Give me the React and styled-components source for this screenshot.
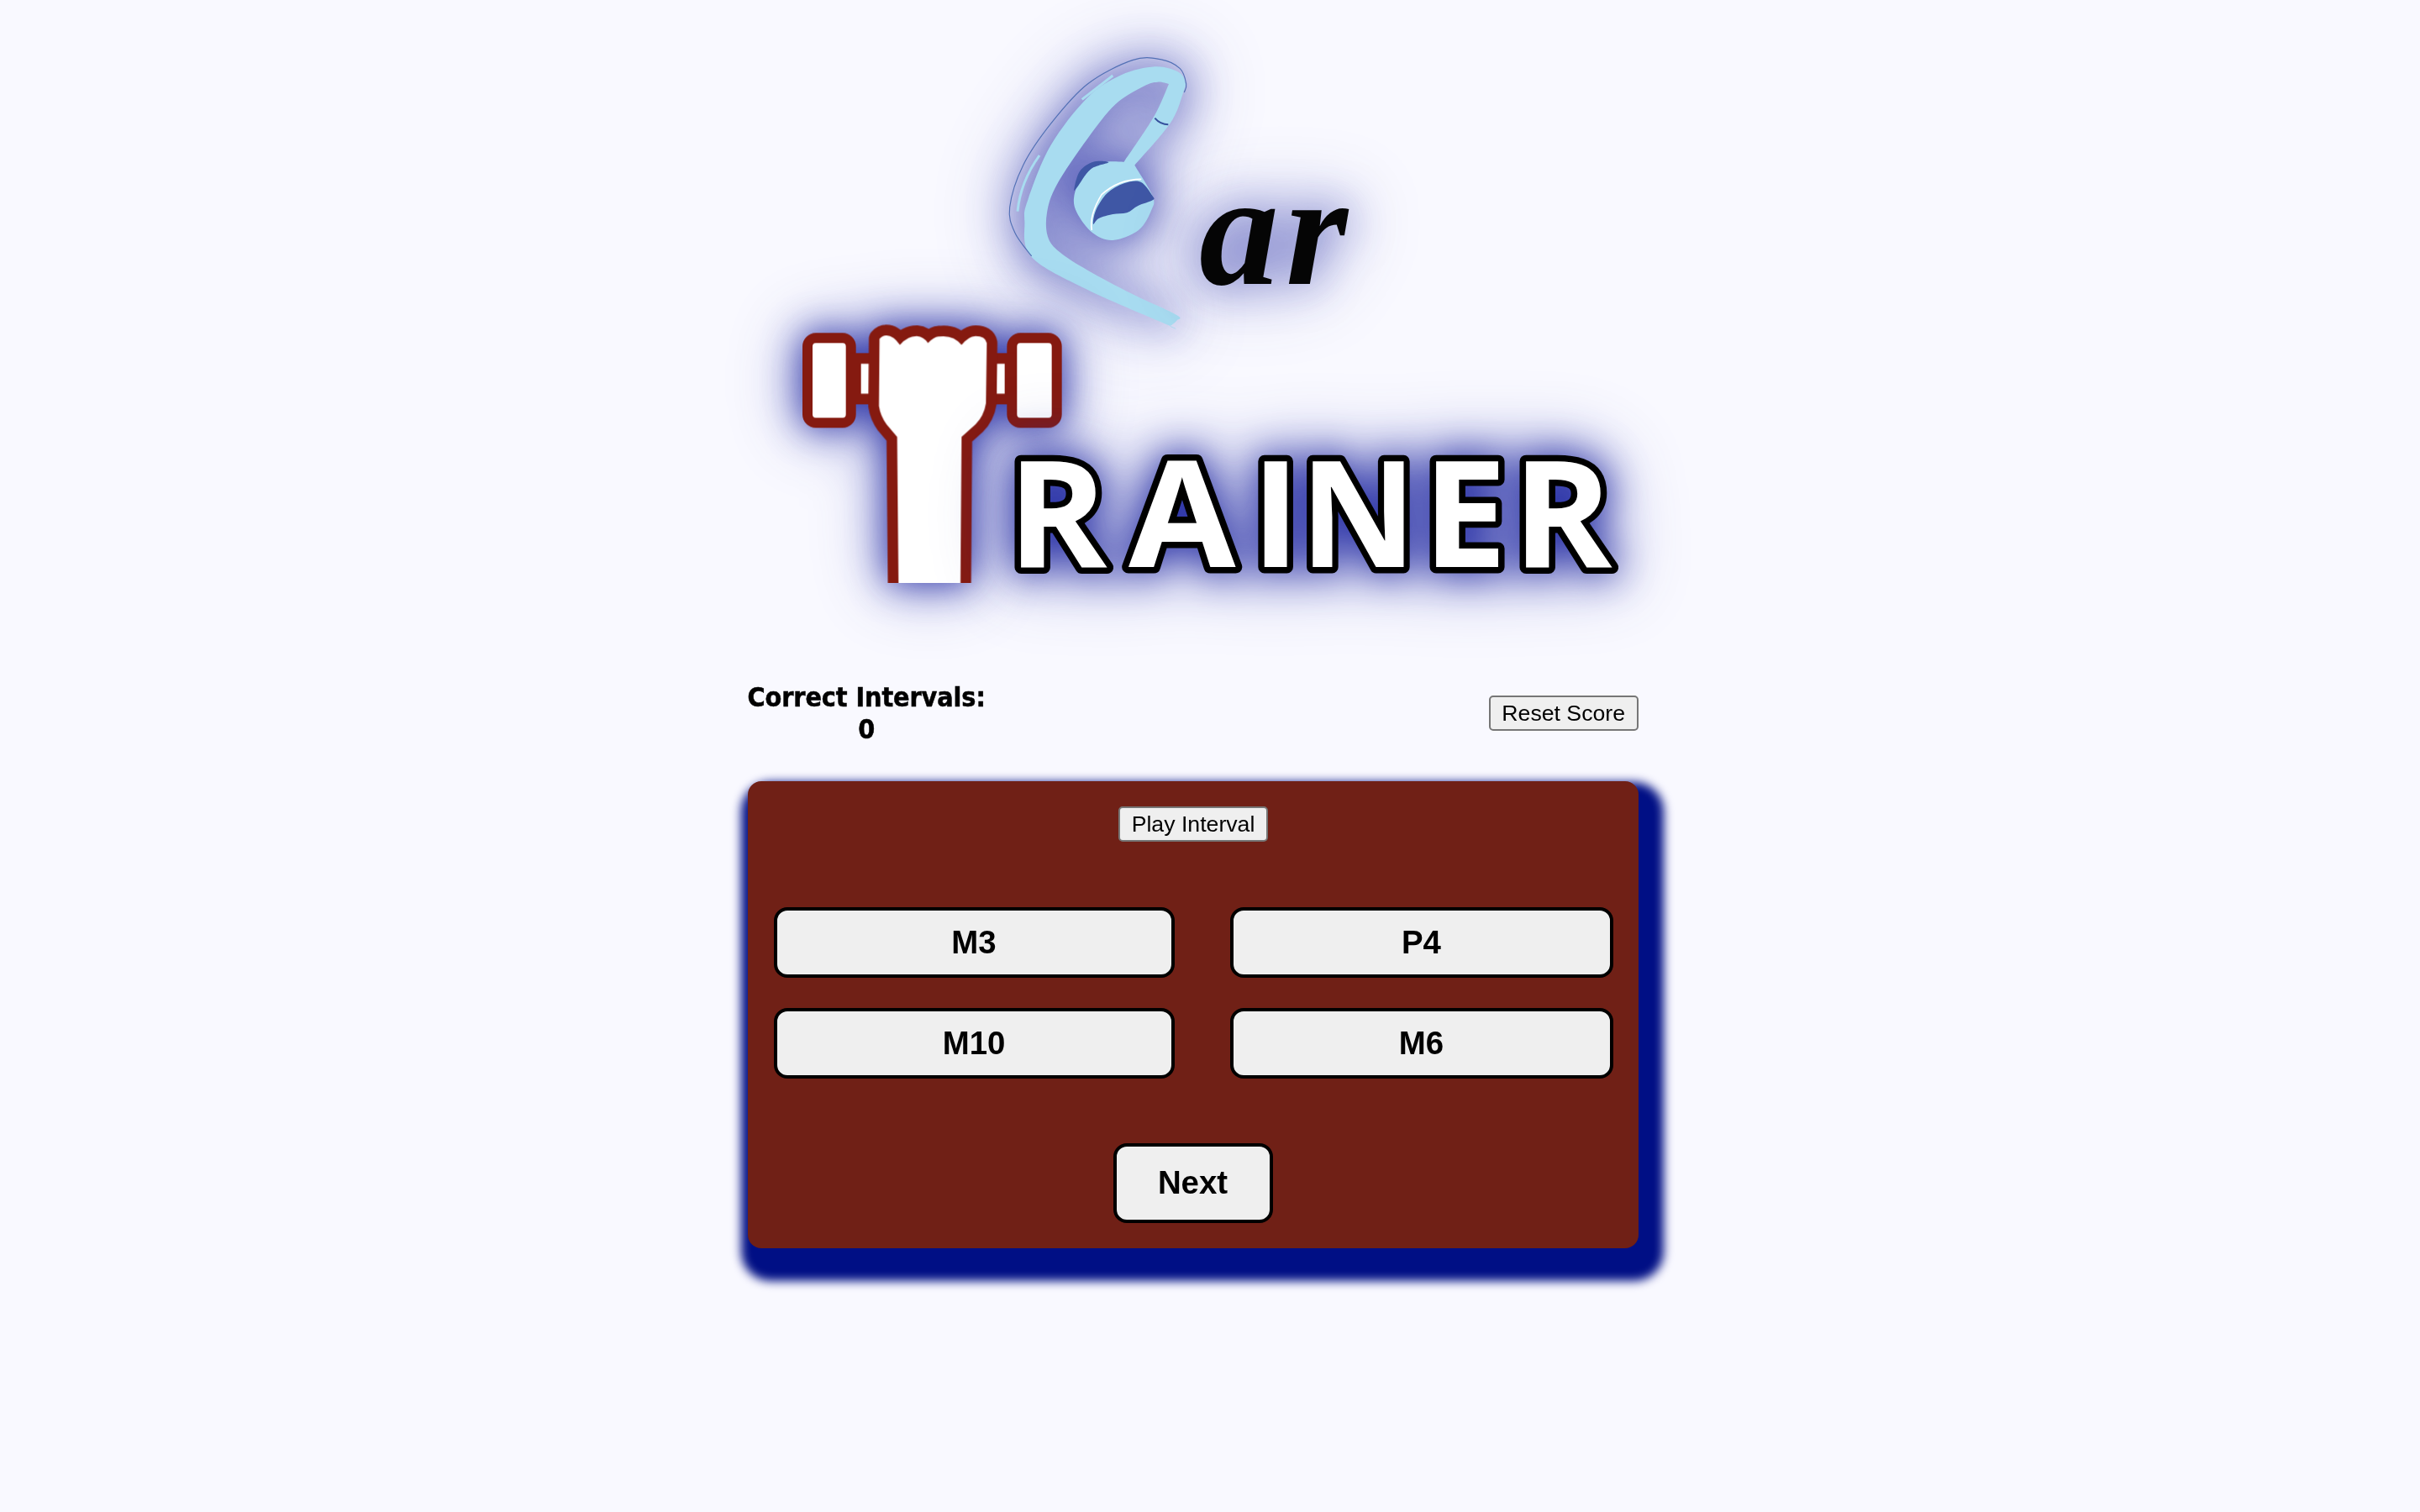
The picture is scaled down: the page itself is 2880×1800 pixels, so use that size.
import React from "react";
import styled, { createGlobalStyle } from "styled-components";

const GlobalStyle = createGlobalStyle`
  html, body { margin: 0; padding: 0; background: #f9f9ff; }
  body { font-family: "Liberation Sans", Arial, sans-serif; }
`;

const Page = styled.main`
  min-height: 1800px;
  box-sizing: border-box;
  padding-right: 41px;
  display: flex;
  flex-direction: column;
  align-items: center;
  background: #f9f9ff;
`;

const Column = styled.div`
  width: 1060px;
  display: flex;
  flex-direction: column;
`;

const LogoSvg = styled.svg`
  display: block;
  width: 1060px;
  height: 811px;
  overflow: visible;
`;

const Glow = styled.g`
  filter: drop-shadow(0 0 ${(p) => p.$blur}px rgba(38, 46, 165, ${(p) => p.$alpha}))
    drop-shadow(0 0 ${(p) => p.$blur * 1.6}px rgba(38, 46, 165, 0.45));
`;

const ScriptText = styled.text`
  font-family: "Liberation Serif", serif;
  font-style: italic;
  font-weight: 700;
  font-size: 190px;
  letter-spacing: 8px;
  fill: #050505;
`;

const TrainerLetter = styled.text`
  font-family: "Open Sans", sans-serif;
  font-weight: 700;
  font-size: 176px;
  fill: #fff;
  stroke: #000;
  stroke-width: 15px;
  stroke-linejoin: round;
  paint-order: stroke fill;
`;

const ScoreRow = styled.section`
  display: flex;
  justify-content: space-between;
  align-items: center;
  height: 76px;
`;

const Score = styled.div`
  font-family: "DejaVu Sans", sans-serif;
  font-weight: 700;
  font-stretch: condensed;
  font-size: 32px;
  letter-spacing: -0.1px;
  -webkit-text-stroke: 0.5px #000;
  line-height: 38px;
  text-align: center;
  color: #000;
`;

const SmallButton = styled.button`
  box-sizing: border-box;
  height: 42px;
  padding: 0 13.5px;
  border: 2px solid #767676;
  border-radius: 5px;
  background: #efefef;
  color: #000;
  font-family: "Liberation Sans", Arial, sans-serif;
  font-size: 26.67px;
  line-height: 1;
`;

const Panel = styled.section`
  margin-top: 43px;
  box-sizing: border-box;
  height: 556px;
  padding: 30px 30px 30px 31px;
  border-radius: 16px;
  background: #702016;
  box-shadow: 11px 20px 12px 19px #000f85;
  display: flex;
  flex-direction: column;
  align-items: center;
`;

const PlayRow = styled.div`
  width: 100%;
  display: flex;
  justify-content: center;
  box-sizing: border-box;
`;

const AnswerGrid = styled.div`
  width: 100%;
  margin-top: 78px;
  display: grid;
  grid-template-columns: 477fr 456fr;
  column-gap: 66px;
  row-gap: 36px;
`;

const BigButton = styled.button`
  box-sizing: border-box;
  border: 4px solid #000;
  border-radius: 16px;
  background: #efefef;
  color: #000;
  font-family: "Liberation Sans", Arial, sans-serif;
  font-weight: 700;
  font-size: 38.4px;
  line-height: 1;
`;

const AnswerButton = styled(BigButton)`
  height: 84px;
`;

const NextButton = styled(BigButton)`
  margin: 77px 1px 0 0;
  width: 190px;
  height: 96px;
`;

const smooth = (pts, closed = true) => {
  let d = `M${pts[0][0]} ${pts[0][1]}`;
  const n = pts.length;
  const at = (i) => (closed ? pts[(i + n) % n] : pts[Math.max(0, Math.min(n - 1, i))]);
  for (let i = 0; i < (closed ? n : n - 1); i++) {
    const p0 = at(i - 1);
    const p1 = at(i);
    const p2 = at(i + 1);
    const p3 = at(i + 2);
    d += `C${p1[0] + (p2[0] - p0[0]) / 6} ${p1[1] + (p2[1] - p0[1]) / 6} ${p2[0] - (p3[0] - p1[0]) / 6} ${p2[1] - (p3[1] - p1[1]) / 6} ${p2[0]} ${p2[1]}`;
  }
  return closed ? d + "Z" : d;
};

const headset = smooth([
  [695, 1014], [695, 1014], [400, 885], [200, 768], [175, 640], [188, 560], [268, 370], [398, 200], [520, 118], [640, 88],
  [720, 105], [748, 140], [740, 185], [694, 292], [568, 440], [568, 440], [632, 550], [628, 600], [582, 672], [490, 708],
  [418, 682], [362, 610], [352, 550], [383, 480], [450, 432], [530, 428], [530, 428], [636, 268], [690, 150], [690, 150],
  [650, 143], [600, 158], [500, 222], [400, 345], [290, 510], [255, 610], [258, 695], [300, 750], [400, 815], [560, 900],
  [718, 975], [718, 995],
]);

const cupDark = smooth([
  [420, 650], [430, 600], [470, 540], [530, 505], [590, 500], [632, 550], [632, 565], [580, 585], [540, 610], [490, 615], [440, 630],
]);

const cupBack = smooth([[352, 525], [372, 462], [420, 428], [475, 430], [410, 455], [362, 520]]);

const earOutline = smooth(
  [[200, 765], [140, 680], [122, 590], [170, 440], [270, 290], [400, 150], [560, 65], [660, 62], [730, 95], [752, 150], [745, 180]],
  false,
);

const fist = "M347 100Q358 88 370 88Q395 86 420 122Q445 90 480 90Q505 92 520 115Q545 90 560 92Q610 85 640 122Q665 90 690 90Q725 90 730 115L727 330Q720 375 690 405L640 450L636 990L415 990L410 450L372 405Q350 375 345 340Z";

const letters = [
  { ch: "R", x: 1198, sx: 1.02 },
  { ch: "A", x: 1342, sx: 1.05 },
  { ch: "I", x: 1488, sx: 1 },
  { ch: "N", x: 1546, sx: 0.97 },
  { ch: "E", x: 1692, sx: 1.02 },
  { ch: "R", x: 1799, sx: 1.02 },
];

const LogoMark = () => (
  <LogoSvg viewBox="889 0 1060 811" role="img" aria-label="Ear Trainer">
    <Glow $blur={26} $alpha={0.8}>
      <g transform="translate(1160 50) scale(0.33333)">
        <path d={headset} fill="#a8dcf0" />
        <path d={cupBack} fill="#3f57a5" />
        <path d={cupDark} fill="#3f57a5" />
        <path d="M415 672Q405 620 450 545Q510 490 592 490" fill="none" stroke="#fff" strokeWidth="5" />
        <path d={earOutline} fill="none" stroke="#5270b5" strokeWidth="3.5" />
        <path d="M150 605Q160 500 228 405" fill="none" stroke="#a8dcf0" strokeWidth="9" />
        <path d="M380 205L490 120" fill="none" stroke="#a8dcf0" strokeWidth="9" />
        <path d="M640 272Q660 295 688 295" fill="none" stroke="#35509c" strokeWidth="6" />
      </g>
    </Glow>
    <Glow $blur={26} $alpha={0.6}>
      <ScriptText x="1426" y="338">ar</ScriptText>
    </Glow>
    <Glow $blur={22} $alpha={0.9}>
      <g transform="translate(930 370) scale(0.33333)">
        <rect x="90" y="97" width="155" height="303" rx="30" fill="#fff" stroke="#851a10" strokeWidth="36" />
        <rect x="820" y="97" width="160" height="303" rx="30" fill="#fff" stroke="#851a10" strokeWidth="36" />
        <rect x="262" y="170" width="70" height="145" fill="#fff" stroke="#851a10" strokeWidth="38" />
        <rect x="745" y="170" width="68" height="145" fill="#fff" stroke="#851a10" strokeWidth="38" />
        <clipPath id="arm-clip">
          <rect x="200" y="0" width="700" height="971" />
        </clipPath>
        <path d={fist} clipPath="url(#arm-clip)" fill="#fff" stroke="#851a10" strokeWidth="76" strokeLinejoin="round" paintOrder="stroke fill" />
      </g>
    </Glow>
    <Glow $blur={24} $alpha={1}>
      {letters.map((l, i) => (
        <TrainerLetter key={i} y="675" transform={`translate(${l.x} 0) scale(${l.sx} 1)`}>
          {l.ch}
        </TrainerLetter>
      ))}
    </Glow>
  </LogoSvg>
);

export default function App() {
  return (
    <>
      <GlobalStyle />
      <Page>
        <Column>
          <LogoMark />
          <ScoreRow>
            <Score>
              Correct Intervals:
              <br />0
            </Score>
            <SmallButton>Reset Score</SmallButton>
          </ScoreRow>
          <Panel>
            <PlayRow>
              <SmallButton>Play Interval</SmallButton>
            </PlayRow>
            <AnswerGrid>
              <AnswerButton>M3</AnswerButton>
              <AnswerButton>P4</AnswerButton>
              <AnswerButton>M10</AnswerButton>
              <AnswerButton>M6</AnswerButton>
            </AnswerGrid>
            <NextButton>Next</NextButton>
          </Panel>
        </Column>
      </Page>
    </>
  );
}
